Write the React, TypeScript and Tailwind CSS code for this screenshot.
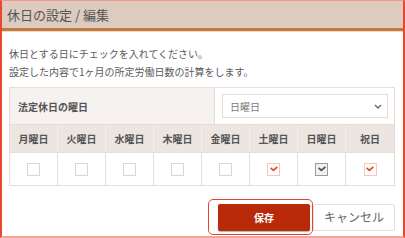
import React from "react";

const DAYS = [
  { label: "月曜日", state: "off" },
  { label: "火曜日", state: "off" },
  { label: "水曜日", state: "off" },
  { label: "木曜日", state: "off" },
  { label: "金曜日", state: "off" },
  { label: "土曜日", state: "red" },
  { label: "日曜日", state: "gray" },
  { label: "祝日", state: "red" },
] as const;

// ── Checkbox ──────────────────────────────────────────────────────────────────

function Box({ state }: { state: "off" | "red" | "gray" }) {
  if (state === "off") {
    return <span className="block w-[13px] h-[13px] border border-[#dcd6d2] bg-white" />;
  }
  const gray = state === "gray";
  return (
    <span
      className={
        "flex items-center justify-center w-[13px] h-[13px] border " +
        (gray ? "border-[#9a9a9a] bg-[#f1f1f1]" : "border-[#f1c9bf] bg-white")
      }
    >
      <svg width="8" height="6" viewBox="0 0 8 6">
        <path
          d="M1.2 2.4 L3.4 4.4 L6.8 1.4"
          fill="none"
          stroke={gray ? "#505050" : "#e8472a"}
          strokeWidth="1.8"
          strokeLinecap="round"
          strokeLinejoin="round"
        />
      </svg>
    </span>
  );
}

export default function App() {
  return (
    <div
      className="w-[405px] h-[238px] bg-white flex flex-col border-x-2 border-x-[#e8482d] border-t border-t-[#f0998a] border-b-2 border-b-[#f4a596] overflow-hidden"
      style={{ fontFamily: '"Noto Sans CJK JP", "Noto Sans", sans-serif' }}
    >
      {/* Header */}
      <div className="h-[27px] flex items-center bg-[#dccbbe] px-[5px] text-[13px] text-[#555] leading-none">
        休日の設定 / 編集
      </div>
      <div className="h-[3px] bg-[#c27a3e]" />
      <div className="h-[1px] bg-[#ead9cc]" />

      {/* Description */}
      <div className="pl-[7px] pt-[13px] text-[10px] leading-[18px] text-[#5a5a5a]">
        <p>休日とする日にチェックを入れてください。</p>
        <p>設定した内容で1ヶ月の所定労働日数の計算をします。</p>
      </div>

      {/* Table */}
      <div className="ml-[7px] mt-[6px] w-[386px] border border-[#e8dcd4]">
        <div className="flex h-[37px] border-b border-[#e8dcd4]">
          <div className="w-[206px] bg-[#f6f2f1] border-r border-[#e8dcd4] flex items-center pl-[8px] text-[10px] font-bold text-[#555]">
            法定休日の曜日
          </div>
          <div className="flex-1 flex items-center pl-[7px] pr-[6px]">
            <div className="w-[166px] h-[24px] border border-[#e6dcd6] flex items-center pl-[7px] pr-[5px] text-[10px] text-[#7a7a7a]">
              <span className="flex-1">日曜日</span>
              <svg width="8" height="5" viewBox="0 0 8 5">
                <path d="M1 1 L4 4 L7 1" fill="none" stroke="#666" strokeWidth="1.3" />
              </svg>
            </div>
          </div>
        </div>
        <div className="grid grid-cols-8 h-[28px] bg-[#ece5e2] border-b border-[#e8dcd4]">
          {DAYS.map((d, i) => (
            <div
              key={d.label}
              className={
                "flex items-center justify-center text-[10px] font-bold text-[#555] " +
                (i < 7 ? "border-r border-[#f6f0ec]" : "")
              }
            >
              {d.label}
            </div>
          ))}
        </div>
        <div className="grid grid-cols-8 h-[32px]">
          {DAYS.map((d, i) => (
            <div
              key={d.label}
              className={
                "flex items-center justify-center " + (i < 7 ? "border-r border-[#e8dcd4]" : "")
              }
            >
              <Box state={d.state} />
            </div>
          ))}
        </div>
      </div>

      {/* Buttons */}
      <div className="flex justify-end items-center mt-[13px] pr-[8px]">
        <div className="pl-[9px] pr-[2px] py-[3px] border-[1.5px] border-[#e0462b] rounded-[5px]">
          <button className="w-[92px] h-[27px] bg-[#b82a08] rounded-[2px] text-white text-[10px] font-bold shadow-[0_1px_1px_rgba(0,0,0,0.3)]">
            保存
          </button>
        </div>
        <button className="w-[82px] h-[27px] bg-white border border-[#e2dedb] rounded-[2px] text-[12px] text-[#666]">
          キャンセル
        </button>
      </div>
    </div>
  );
}
